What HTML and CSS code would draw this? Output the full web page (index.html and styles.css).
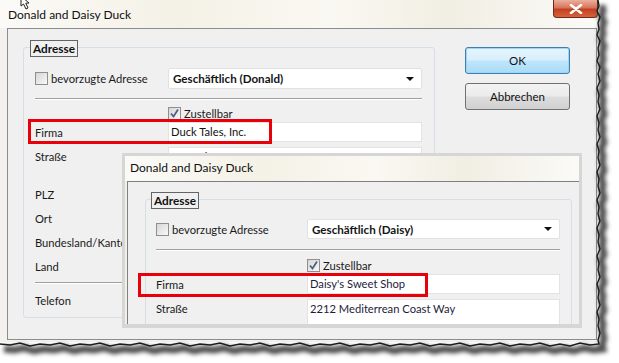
FILE: index.html
```html
<!DOCTYPE html>
<html lang="de">
<head>
  <meta charset="UTF-8">
  <title>Donald and Daisy Duck</title>
  <link rel="stylesheet" href="styles.css">
</head>
<body>
  <div class="desktop">

    <div class="window main">
      <div class="titlebar">
        <span class="title">Donald and Daisy Duck</span>
        <div class="close">
          <svg width="14" height="10" viewBox="0 0 14 10"><path d="M2 1 L12 9 M12 1 L2 9" stroke="#fff" stroke-width="2.6" stroke-linecap="round"/></svg>
        </div>
      </div>
      <div class="client">
        <div class="group">
          <div class="legend">Adresse</div>
          <div class="row row-combo">
            <label class="check-label"><span class="check"></span>bevorzugte Adresse</label>
            <div class="combo"><span>Geschäftlich (Donald)</span><span class="arrow"></span></div>
          </div>
          <div class="sep"></div>
          <div class="row row-check">
            <span></span>
            <label class="check-label"><span class="check checked"><svg width="11" height="11" viewBox="0 0 11 11"><path d="M2 5.5 L4.5 8.5 L9 1.5" stroke="#4d6185" stroke-width="1.8" fill="none"/></svg></span>Zustellbar</label>
          </div>
          <div class="row row-field">
            <span>Firma</span>
            <div class="input">Duck Tales, Inc.</div>
          </div>
          <div class="row row-field row-street">
            <span>Straße</span>
            <div class="input">100 Lake Street</div>
          </div>
          <div class="row row-field row-list">
            <span>PLZ</span>
            <div class="input"></div>
          </div>
          <div class="row row-field row-list">
            <span>Ort</span>
            <div class="input"></div>
          </div>
          <div class="row row-field row-list">
            <span>Bundesland/Kanton</span>
            <div class="input"></div>
          </div>
          <div class="row row-field row-list">
            <span>Land</span>
            <div class="input"></div>
          </div>
          <div class="sep sep-low"></div>
          <div class="row row-field row-phone">
            <span>Telefon</span>
            <div class="input"></div>
          </div>
        </div>
        <div class="buttons">
          <button class="btn btn-default">OK</button>
          <button class="btn">Abbrechen</button>
        </div>
      </div>
    </div>

    <div class="window popup">
      <div class="titlebar">
        <span class="title">Donald and Daisy Duck</span>
      </div>
      <div class="client">
        <div class="group">
          <div class="legend">Adresse</div>
          <div class="row row-combo">
            <label class="check-label"><span class="check"></span>bevorzugte Adresse</label>
            <div class="combo"><span>Geschäftlich (Daisy)</span><span class="arrow"></span></div>
          </div>
          <div class="sep"></div>
          <div class="row row-check">
            <span></span>
            <label class="check-label"><span class="check checked"><svg width="11" height="11" viewBox="0 0 11 11"><path d="M2 5.5 L4.5 8.5 L9 1.5" stroke="#4d6185" stroke-width="1.8" fill="none"/></svg></span>Zustellbar</label>
          </div>
          <div class="row row-field">
            <span>Firma</span>
            <div class="input">Daisy's Sweet Shop</div>
          </div>
          <div class="row row-field row-street">
            <span>Straße</span>
            <div class="input">2212 Mediterrean Coast Way</div>
          </div>
        </div>
      </div>
    </div>

    <div class="mark mark-main"></div>
    <div class="mark mark-popup"></div>

    <svg class="torn" width="619" height="363" viewBox="0 0 619 363">
      <defs>
        <filter id="soft" x="-10%" y="-10%" width="120%" height="120%"><feGaussianBlur stdDeviation="2"/></filter>
      </defs>
      <polyline filter="url(#soft)" transform="translate(4,5)" fill="none" stroke="#505050" stroke-width="7"
        points="598,0 599,6 597,11 600,17 598,23 599,29 597,35 600,41 598,48 599,55 597,61 600,67 598,74 600,81 597,88 599,95 598,102 600,109 597,116 599,123 598,130 600,137 597,144 599,151 598,158 600,165 597,172 599,179 598,186 600,193 597,200 599,207 598,214 600,221 597,228 599,235 598,242 600,249 597,256 599,263 598,270 600,277 597,284 599,291 598,298 600,305 597,312 599,319 598,326 600,333 598,340 599,344 590,345 580,343 570,346 560,344 550,346 540,343 530,345 520,344 510,346 500,343 490,345 480,344 470,346 460,343 450,345 440,344 430,346 420,343 410,345 400,344 390,346 380,343 370,345 360,344 350,346 340,343 330,345 320,344 310,346 300,343 290,345 280,344 270,346 260,343 250,345 240,344 230,346 220,343 210,345 200,344 190,346 180,343 170,345 160,344 150,346 140,343 130,345 120,344 110,346 100,343 90,345 80,344 70,346 60,343 50,345 40,344 30,346 20,343 10,345 0,344"/>
      <polyline fill="none" stroke="#1c1c1c" stroke-width="1.4"
        points="598,0 599,6 597,11 600,17 598,23 599,29 597,35 600,41 598,48 599,55 597,61 600,67 598,74 600,81 597,88 599,95 598,102 600,109 597,116 599,123 598,130 600,137 597,144 599,151 598,158 600,165 597,172 599,179 598,186 600,193 597,200 599,207 598,214 600,221 597,228 599,235 598,242 600,249 597,256 599,263 598,270 600,277 597,284 599,291 598,298 600,305 597,312 599,319 598,326 600,333 598,340 599,344 590,345 580,343 570,346 560,344 550,346 540,343 530,345 520,344 510,346 500,343 490,345 480,344 470,346 460,343 450,345 440,344 430,346 420,343 410,345 400,344 390,346 380,343 370,345 360,344 350,346 340,343 330,345 320,344 310,346 300,343 290,345 280,344 270,346 260,343 250,345 240,344 230,346 220,343 210,345 200,344 190,346 180,343 170,345 160,344 150,346 140,343 130,345 120,344 110,346 100,343 90,345 80,344 70,346 60,343 50,345 40,344 30,346 20,343 10,345 0,344"/>
      <path d="M21 -4 L21 6 L23.5 4 L26 9 L28 8 L25.8 3.2 L29 3 Z" fill="#fff" stroke="#222" stroke-width="1"/>
    </svg>

  </div>
</body>
</html>
```

FILE: styles.css
```css
* {
  box-sizing: border-box;
}

body {
  margin: 0;
  background: #fff;
  font-family: Lato, "Noto Sans", sans-serif;
  font-size: 11.2px;
  color: #1a1a1a;
}

.desktop {
  position: relative;
  width: 619px;
  height: 363px;
  overflow: hidden;
}

/* windows */

.window {
  display: flex;
  flex-direction: column;
}

.main {
  width: 597px;
  height: 342px;
  background: #f3f2ee;
}

.titlebar {
  display: flex;
  align-items: center;
  height: 28px;
  padding-left: 8px;
  background: linear-gradient(90deg, #fbfaf7 0%, #f4f1e6 30%, #faf8f2 55%, #f1eee3 75%, #fbfaf7 100%);
}

.title {
  font-size: 12px;
  color: #101010;
}

.close {
  display: flex;
  align-items: center;
  justify-content: center;
  align-self: flex-start;
  margin-left: auto;
  margin-right: -1px;
  width: 45px;
  height: 18px;
  border: 1px solid #6b2b1b;
  border-top: none;
  border-radius: 0 0 4px 4px;
  background: linear-gradient(#eab09c 0%, #d9745a 45%, #c3401f 55%, #d8623e 100%);
}

.client {
  flex: 1;
  display: flex;
  align-items: flex-start;
  margin: 0 0 2px 7px;
  padding: 18px 0 0 15px;
  border: 1px solid #8c8c8c;
  background: #f0f0f0;
}

/* group box */

.group {
  position: relative;
  width: 412px;
  height: 271px;
  padding: 0 12px 0 11px;
  border: 1px solid #d5dfe5;
  border-radius: 3px;
}

.legend {
  position: absolute;
  left: 6px;
  top: -8px;
  height: 17px;
  padding: 0 2px;
  border: 1px solid #646464;
  background: #f0f0f0;
  font-weight: bold;
  font-size: 11.8px;
  line-height: 15px;
  color: #111;
}

.row {
  display: grid;
  grid-template-columns: 133px 1fr;
  align-items: center;
}

.row-combo {
  margin-top: 20px;
  height: 21px;
}

.row-check {
  margin-top: 5px;
  height: 16px;
}

.row-field {
  margin-top: 1px;
  height: 20px;
}

.row-street {
  margin-top: 5px;
  height: 33px;
  align-items: start;
}

.row-street > span {
  line-height: 19px;
}

.row-list {
  margin-top: 4px;
}

.row-phone {
  margin-top: 6px;
}

.sep {
  height: 2px;
  margin-top: 9px;
  border-top: 1px solid #a0a0a0;
  border-bottom: 1px solid #fff;
}

.sep-low {
  margin-top: 6px;
  margin-right: 40px;
}

.check-label {
  display: flex;
  align-items: center;
  white-space: nowrap;
}

.check {
  display: flex;
  align-items: center;
  justify-content: center;
  width: 13px;
  height: 13px;
  margin-right: 3px;
  border: 1px solid #8f8f8f;
  background: linear-gradient(135deg, #d6d6d6, #f9f9f9);
}

.combo {
  display: flex;
  align-items: center;
  height: 21px;
  padding: 0 4px;
  border: 1px solid #e1e1e1;
  border-radius: 2px;
  background: #fff;
  font-weight: bold;
  font-size: 11.6px;
  color: #141414;
}

.arrow {
  margin-left: auto;
  margin-right: 3px;
  border-left: 4px solid transparent;
  border-right: 4px solid transparent;
  border-top: 4px solid #111;
}

.input {
  height: 100%;
  padding: 2px 2px 0;
  border: 1px solid #e3e3e3;
  background: #fff;
  color: #111;
  white-space: nowrap;
  overflow: hidden;
}

/* buttons */

.buttons {
  display: flex;
  flex-direction: column;
  gap: 9px;
  width: 105px;
  margin-left: 30px;
}

.btn {
  height: 27px;
  border: 1px solid #707070;
  border-radius: 3px;
  background: linear-gradient(#f3f3f3 0%, #ebebeb 48%, #dddddd 52%, #d0d0d0 100%);
  font-family: inherit;
  font-size: 11.5px;
  color: #111;
}

.btn-default {
  border-color: #3c7fb1;
  background: linear-gradient(#e6f5fd 0%, #d8effc 48%, #bee6fd 52%, #a9dbf6 100%);
  box-shadow: inset 0 0 0 1px #9fd6f3;
}

/* the second dialog lies over the first */

.popup {
  position: absolute;
  left: 122px;
  top: 153px;
  width: 460px;
  height: 175px;
  border: 3px solid #d6d6d6;
  border-bottom-width: 4px;
  background: #f2f0e8;
}

.popup .titlebar {
  height: 25px;
  padding: 0 0 3px 5px;
}

.popup .client {
  margin: 0 0 0 2px;
  padding: 17px 0 0 17px;
  border-right: none;
  border-bottom: none;
  border-color: #7f7f7f;
  overflow: hidden;
}

.popup .group {
  width: 427px;
  height: 200px;
  padding: 0 11px 0 10px;
}

.popup .legend {
  left: 5px;
}

.popup .row {
  grid-template-columns: 151px 1fr;
}

.popup .row-combo {
  margin-top: 19px;
  height: 20px;
}

.popup .combo {
  height: 20px;
}

.popup .sep {
  margin-top: 10px;
}

.popup .row-check {
  margin-top: 6px;
}

.popup .input {
  color: #1c1c3a;
}

/* annotations */

.mark {
  position: absolute;
  border: 3px solid #e8000b;
}

.mark-main {
  left: 28px;
  top: 119px;
  width: 244px;
  height: 25px;
}

.mark-popup {
  left: 138px;
  top: 273px;
  width: 290px;
  height: 24px;
}

.torn {
  position: absolute;
  left: 0;
  top: 0;
  pointer-events: none;
}
```
